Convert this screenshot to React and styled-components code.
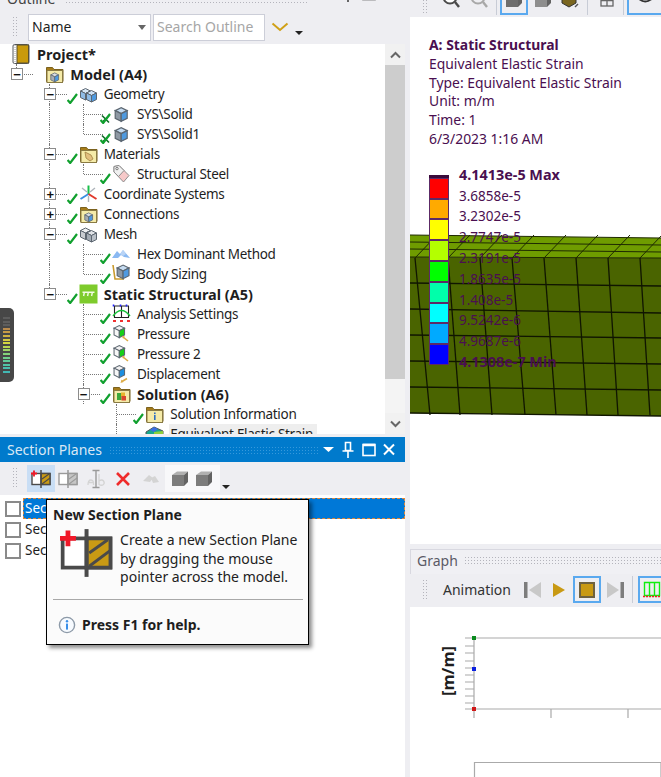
import React from "react";
import styled, { createGlobalStyle } from "styled-components";

const GlobalStyle = createGlobalStyle`
    html, body {
        margin: 0;
        padding: 0;
        overflow: hidden;
    }
    * {
        box-sizing: border-box;
    }
`

const FONT = `"Noto Sans", "Open Sans", "Liberation Sans", sans-serif`

const grip = `
    background-image: radial-gradient(#b4b4bc 0.8px, transparent 1px);
    background-size: 3px 3px;
`

/* tree data: cells describe the guide column for each indent level */
const treeRows = [
    { label: "Project*", bold: true, icon: "book", cells: [] },
    { label: "Model (A4)", bold: true, icon: "modelFolder", cells: ["minusUp"] },
    { label: "Geometry", icon: "cubes", mark: "check", cells: ["", "minus"] },
    { label: "SYS\\Solid", icon: "cube", mark: "cross", cells: ["", "pipe", "tee"] },
    { label: "SYS\\Solid1", icon: "cube", mark: "cross", cells: ["", "pipe", "end"] },
    { label: "Materials", icon: "tagFolder", mark: "check", cells: ["", "minus"] },
    { label: "Structural Steel", icon: "tag", mark: "check", cells: ["", "pipe", "end"] },
    { label: "Coordinate Systems", icon: "axes", mark: "check", cells: ["", "plus"] },
    { label: "Connections", icon: "modelFolder", mark: "check", cells: ["", "plus"] },
    { label: "Mesh", icon: "meshCube", mark: "check", cells: ["", "minus"] },
    { label: "Hex Dominant Method", icon: "wave", mark: "check", cells: ["", "pipe", "tee"] },
    { label: "Body Sizing", icon: "sizing", mark: "check", cells: ["", "pipe", "end"] },
    { label: "Static Structural (A5)", bold: true, icon: "static", mark: "check", cells: ["", "minusUp"] },
    { label: "Analysis Settings", icon: "analysis", mark: "check", cells: ["", "", "tee"] },
    { label: "Pressure", icon: "pressure", mark: "check", cells: ["", "", "tee"] },
    { label: "Pressure 2", icon: "pressure", mark: "check", cells: ["", "", "tee"] },
    { label: "Displacement", icon: "displacement", mark: "check", cells: ["", "", "tee"] },
    { label: "Solution (A6)", bold: true, icon: "solutionFolder", mark: "check", cells: ["", "", "minus"] },
    { label: "Solution Information", icon: "infoFolder", mark: "check", cells: ["", "", "", "tee"] },
    { label: "Equivalent Elastic Strain", icon: "contour", hover: true, cells: ["", "", "", "tee"] },
]

const legendBands = ["#ff0000", "#ffaa00", "#ffff00", "#b4ff00", "#00ff00", "#00ffaa", "#00ffff", "#00aaff", "#0000ff"]

const legendLabels = [
    { text: "4.1413e-5 Max", bold: true },
    { text: "3.6858e-5" },
    { text: "3.2302e-5" },
    { text: "2.7747e-5" },
    { text: "2.3191e-5" },
    { text: "1.8635e-5" },
    { text: "1.408e-5" },
    { text: "9.5242e-6" },
    { text: "4.9687e-6" },
    { text: "4.1308e-7 Min", bold: true },
]

const meterTicks = ["#5d5d5d", "#5d5d5d", "#5d5d5d", "#b98a4c", "#c79a45", "#d0b040", "#d5c93f", "#d2d640", "#b7d64f", "#9ed566", "#84d37a", "#6fd08b", "#5fcb9a", "#52c5a6", "#49bfae", "#42b8b4"]

const CUBE_BLUE = "#4f9ae0"

const TreeIcon = ({ kind }) => {
    const cube = (x, y, s, front, top = "#d9dde2", side = "#a9adb3") => (
        <g transform={`translate(${x} ${y}) scale(${s})`} stroke="#5c6670" strokeWidth="1">
            <polygon points="1,3 6,0.5 11,3 6,5.5" fill={top} />
            <polygon points="1,3 6,5.5 6,12 1,9.5" fill={side} />
            <polygon points="6,5.5 11,3 11,9.5 6,12" fill={front} />
        </g>
    )
    const folder = (glyph) => (
        <g>
            <path d="M1.5 17.5V3.5h6l1.5 2h9v12z" fill="#a67c1a" stroke="#7b621f" strokeWidth="1" />
            <rect x="2" y="6.5" width="15.5" height="12" fill="#f5eba9" stroke="#8a7b44" strokeWidth="1" />
            {glyph}
        </g>
    )
    switch (kind) {
        case "book":
            return (
                <svg width="19" height="20" viewBox="0 0 19 20">
                    <rect x="1" y="0.5" width="16" height="19" rx="1.5" fill="#fff" stroke="#55585d" />
                    <rect x="5" y="1" width="11.5" height="18" fill="#c99a0b" stroke="#5a5030" />
                    <path d="M3 1v18" stroke="#a0a0a0" strokeDasharray="1 1" />
                </svg>
            )
        case "modelFolder":
            return <svg width="19" height="20" viewBox="0 0 19 20">{folder(cube(5, 8.5, 0.78, CUBE_BLUE))}</svg>
        case "tagFolder":
            return (
                <svg width="19" height="20" viewBox="0 0 19 20">
                    {folder(<path d="M6 8l6 3 2 4-3 2-4-3z" fill="#e2bf7e" stroke="#a08040" strokeWidth="0.8" />)}
                </svg>
            )
        case "solutionFolder":
            return (
                <svg width="19" height="20" viewBox="0 0 19 20">
                    {folder(
                        <g>
                            <rect x="5" y="9" width="4.5" height="7" fill="#3da83c" />
                            <rect x="9" y="8.5" width="4" height="4" fill="#e8b52c" />
                            <rect x="9.5" y="12" width="4.5" height="4.5" fill="#d9472f" />
                        </g>
                    )}
                </svg>
            )
        case "infoFolder":
            return (
                <svg width="19" height="20" viewBox="0 0 19 20">
                    {folder(
                        <g>
                            <rect x="9" y="8.5" width="1.6" height="1.6" fill="#2f6fc0" />
                            <rect x="9" y="11" width="1.6" height="5" fill="#2f6fc0" />
                        </g>
                    )}
                </svg>
            )
        case "cubes":
            return (
                <svg width="19" height="20" viewBox="0 0 19 20">
                    {cube(0.5, 4, 1, "#b7d6f2", "#d8e8f6", "#8fbce6")}
                    {cube(6.5, 6, 1, CUBE_BLUE, "#cfe3f6", "#8fbce6")}
                </svg>
            )
        case "meshCube":
            return (
                <svg width="19" height="20" viewBox="0 0 19 20">
                    {cube(0.5, 3.5, 1, "#dfe2e6", "#eef0f2", "#c8ccd1")}
                    {cube(6.5, 6, 1, "#b9c0c8", "#e0e3e7", "#a4acb5")}
                </svg>
            )
        case "cube":
            return <svg width="19" height="20" viewBox="0 0 19 20">{cube(2, 3, 1.2, CUBE_BLUE, "#c5dbf0", "#8d98a3")}</svg>
        case "tag":
            return (
                <svg width="19" height="20" viewBox="0 0 19 20">
                    <path d="M2 2.5l5-1 10 10-5.5 6.5L2 8z" fill="#f6c9c9" stroke="#8d8d8d" />
                    <path d="M2 2.5l5-1 5 5-5.5 6L2 8z" fill="#f0f0f0" stroke="#8d8d8d" />
                    <circle cx="5" cy="4.6" r="1.2" fill="#fff" stroke="#777" />
                </svg>
            )
        case "axes":
            return (
                <svg width="19" height="20" viewBox="0 0 19 20" strokeWidth="2" fill="none">
                    <path d="M9.5 10V1.5" stroke="#19c04a" />
                    <path d="M9.5 10L1.5 15" stroke="#3a8fe0" />
                    <path d="M9.5 10L17.5 15" stroke="#e0392b" />
                    <path d="M3 4l5 4M16 4l-5 4M9.5 12v6" stroke="#aeb4ba" strokeWidth="1.4" />
                </svg>
            )
        case "wave":
            return (
                <svg width="19" height="20" viewBox="0 0 19 20">
                    <path d="M0 14l5-7 3 3 3-4 7 8-6-1-3-2-3 3z" fill="#8ab9f2" />
                    <path d="M8 10l3-4 3 4-3 2z" fill="#b9d4f6" />
                </svg>
            )
        case "sizing":
            return (
                <svg width="19" height="20" viewBox="0 0 19 20">
                    <path d="M1 1l2 14h9" fill="none" stroke="#c99a2c" strokeWidth="1.6" />
                    {cube(4, 0.5, 1.18, CUBE_BLUE, "#c5dbf0", "#8d98a3")}
                </svg>
            )
        case "static":
            return (
                <svg width="19" height="20" viewBox="0 0 19 20">
                    <rect x="0.5" y="0.5" width="18" height="19" fill="#7ecb2c" />
                    <path d="M3.5 8.2h12M5.4 8.2L4.6 12M9.4 8.2L8.6 12M13.4 8.2L12.6 12" stroke="#f2fbe4" strokeWidth="1.4" fill="none" />
                </svg>
            )
        case "analysis":
            return (
                <svg width="19" height="20" viewBox="0 0 19 20" fill="none">
                    <path d="M2 2h15M2 13.5h15M2.5 2v12M9.5 2v12M16.5 2v12" stroke="#222" strokeWidth="1.1" />
                    <path d="M1.5 0.5v2M8.5 0.5v2M14.5 0.5v2" stroke="#2222ff" strokeWidth="1.6" />
                    <path d="M1 12q8.5-11 17 0" stroke="#18c23a" strokeWidth="1.4" />
                    <path d="M1 17h3M8 17h3M15 17h3" stroke="#f03030" strokeWidth="2" />
                </svg>
            )
        case "pressure":
            return (
                <svg width="19" height="20" viewBox="0 0 19 20">
                    <g transform="translate(1 1)">{cube(0, 0, 1.05, "#18d018", "#f2f2f2", "#f8f8f8")}</g>
                    <path d="M11 13l5 4" stroke="#dcab45" strokeWidth="1.6" />
                    <path d="M10 12l3 0.5-2 2.2z" fill="#dcab45" />
                </svg>
            )
        case "displacement":
            return (
                <svg width="19" height="20" viewBox="0 0 19 20">
                    <g transform="translate(1 1)">{cube(0, 0, 1.05, "#1d8fe0", "#f2f2f2", "#f8f8f8")}</g>
                    <path d="M15 14.5l-5 3" stroke="#dcab45" strokeWidth="1.6" />
                    <path d="M8.5 19l1-3.5 2 2.4z" fill="#dcab45" />
                </svg>
            )
        case "contour":
            return (
                <svg width="19" height="20" viewBox="0 0 19 20">
                    <polygon points="1,8 9,3 18,7 18,14 9,18 1,14" fill="#19a78d" stroke="#555" />
                    <polygon points="5,6 9,3 13,5 9,8" fill="#3d6de0" />
                    <polygon points="9,8 18,7 18,11 9,12" fill="#8fcf3c" />
                </svg>
            )
        default:
            return null
    }
}

const Mark = ({ kind }) => (
    <svg width="11" height="11" viewBox="0 0 11 11">
        {kind === "cross" && <path d="M2 2.5l7 7M9 2.5l-7 7" stroke="#0c6d24" strokeWidth="1.6" />}
        <path d="M0.6 7l2.6 3L10 1" fill="none" stroke="#10a02e" strokeWidth="2.2" />
    </svg>
)

const SectionIcon = ({ size = 20, dim, plus }) => {
    const ink = dim ? "#9a9a9a" : "#4a4a4a"
    const fill = dim ? "#c6c6c6" : "#c99a14"
    return (
        <svg width={size} height={size} viewBox="0 0 20 20">
            <rect x="1" y="4.5" width="18" height="11" fill="#fff" stroke={ink} strokeWidth="1.4" />
            <rect x="10" y="4.5" width="9" height="11" fill={fill} stroke={ink} strokeWidth="1.4" />
            <path d="M11 10l7-5M11 15l8-6" stroke={ink} strokeWidth="1.1" />
            <path d="M10 1v18" stroke={ink} strokeWidth="1.5" />
            {plus && <path d="M0 4.5h6M3 1.5v6" stroke="#f01828" strokeWidth="1.8" />}
        </svg>
    )
}

const SolidIcon = ({ color = "#7c7c7c" }) => (
    <svg width="18" height="18" viewBox="0 0 18 18">
        <polygon points="1,5 6,1.5 17,1.5 13,5" fill="#b0b0b0" />
        <polygon points="1,5 13,5 13,16 1,16" fill={color} />
        <polygon points="13,5 17,1.5 17,12 13,16" fill="#636363" />
    </svg>
)

const WindowControls = ({ color }) => (
    <svg width="78" height="18" viewBox="0 0 78 18" fill="none" stroke={color}>
        <polygon points="5,6 16,6 10.5,11" fill={color} stroke="none" />
        <path d="M27.5 1.5h5v8h-5zM24.5 10h11M30 10v7M32.5 2v7" strokeWidth="1.6" />
        <rect x="45" y="3.5" width="12" height="11" strokeWidth="1.6" />
        <path d="M45 4h12" strokeWidth="2.5" />
        <path d="M66 3.5l10 10M76 3.5l-10 10" strokeWidth="2" />
    </svg>
)

const Chevron = ({ up }) => (
    <svg width="11" height="8" viewBox="0 0 11 8">
        <path d={up ? "M1 6.5l4.5-4.5 4.5 4.5" : "M1 1.5l4.5 4.5 4.5-4.5"} fill="none" stroke="#666" strokeWidth="2" />
    </svg>
)

const verticals = [[415, 430], [448, 460], [480, 492], [512, 525], [544, 556], [576, 587], [608, 618], [640, 650]]
const rowLines = [[283, 286], [309, 313], [335, 338], [361, 364], [387, 390]]

const MeshModel = () => (
    <ModelSvg viewBox="410 17 251 527">
        <polygon points="410,235 661,238 661,258 410,257" fill="#6f9c00" />
        <polygon points="410,257 661,258 661,416 410,413" fill="#4a6400" />
        <g stroke="#1f2a00" strokeWidth="1" fill="none">
            <path d="M410 235L661 238" />
            <path d="M410 242L661 245M410 249L661 252" />
            <path d="M410 257L661 258" />
            {verticals.map(([top]) => (
                <path key={top} d={`M${top} 258L${top + 22} 235`} />
            ))}
            <g strokeWidth="1.3" stroke="#101500">
                {verticals.map(([top, bottom]) => (
                    <path key={top} d={`M${top} 258L${bottom} 415`} />
                ))}
                {rowLines.map(([left, right]) => (
                    <path key={left} d={`M410 ${left}L661 ${right}`} />
                ))}
                <path d="M410 413L661 416" />
            </g>
        </g>
    </ModelSvg>
)

const GraphChart = () => (
    <ChartSvg viewBox="410 607 251 170">
        <g stroke="#aaa" strokeWidth="1.2" fill="none">
            <path d="M465 638H661M474 638V718M465 709H661M551 709V718M628 709V718" />
            <path d="M465 646h9M465 653h9M465 661h9M465 668h9M465 675h9M465 682h9M465 689h9M465 696h9M465 703h9" />
            <path d="M474.5 762.5H661V790H474.5z" />
        </g>
        <rect x="472" y="636" width="4" height="4" fill="#0a8a1e" />
        <rect x="472" y="667" width="4" height="4" fill="#0a20e0" />
        <rect x="472" y="707" width="4" height="4" fill="#d01818" />
        <AxisLabel x="449" y="671" transform="rotate(-90 449 671)" textAnchor="middle" dominantBaseline="middle">
            [m/m]
        </AxisLabel>
    </ChartSvg>
)

const App = () => (
    <Page>
        <GlobalStyle />
        <LeftColumn>
            <ClippedTitle>
                <ClippedTitleText>Outline</ClippedTitleText>
                <TitleGrip />
                <ClippedControls>
                    <WindowControls color="#444" />
                </ClippedControls>
            </ClippedTitle>
            <OutlineToolbar>
                <ToolbarGrip />
                <NameSelect>
                    Name
                    <SelectArrow />
                </NameSelect>
                <SearchBox>Search Outline</SearchBox>
                <FilterChevron viewBox="0 0 18 10">
                    <path d="M1.5 1.5L9 8l7.5-6.5" fill="none" stroke="#d0a017" strokeWidth="2" />
                </FilterChevron>
                <MoreArrow $top={17} $left={6} />
            </OutlineToolbar>
            <TreePanel>
                <TreeBody>
                    {treeRows.map((row) => (
                        <TreeRow key={row.label}>
                            {row.cells.map((cell, i) => (
                                <GuideCell key={i} $type={cell}>
                                    {(cell === "minus" || cell === "minusUp") && <Expander>−</Expander>}
                                    {cell === "plus" && <Expander>+</Expander>}
                                </GuideCell>
                            ))}
                            <MarkSlot>{row.mark && <Mark kind={row.mark} />}</MarkSlot>
                            <IconSlot>
                                <TreeIcon kind={row.icon} />
                            </IconSlot>
                            <TreeLabel $bold={row.bold} $hover={row.hover}>{row.label}</TreeLabel>
                        </TreeRow>
                    ))}
                </TreeBody>
                <Scrollbar>
                    <ScrollButton><Chevron up /></ScrollButton>
                    <ScrollThumb />
                    <ScrollTrack />
                    <ScrollButton><Chevron /></ScrollButton>
                </Scrollbar>
            </TreePanel>
            <SectionHeader>
                <SectionTitle>Section Planes</SectionTitle>
                <SectionGrip />
                <WindowControls color="#fff" />
            </SectionHeader>
            <SectionToolbar>
                <ToolbarGrip />
                <ToolButton $active><SectionIcon plus /></ToolButton>
                <ToolButton><SectionIcon dim /></ToolButton>
                <ToolButton>
                    <svg width="20" height="20" viewBox="0 0 20 20" fill="none">
                        <path d="M10 1v18M6.5 1.5h7M6.5 18.5h7" stroke="#9a9a9a" strokeWidth="1.4" />
                        <path d="M2 16q0-5 3-5t2.5 5M2 13.5h5M13 5v11M13 12q3-2 4.5 0t0 3.5q-2 1.5-4.5 0" stroke="#d4d4d4" strokeWidth="1.3" />
                    </svg>
                </ToolButton>
                <ToolButton>
                    <svg width="18" height="18" viewBox="0 0 18 18">
                        <path d="M3 3l12 12M15 3L3 15" stroke="#ef2b2b" strokeWidth="2.6" />
                    </svg>
                </ToolButton>
                <ToolButton>
                    <svg width="20" height="20" viewBox="0 0 20 20">
                        <path d="M2 12l6-6 4 3-3 4zM10 9l4-2 4 6-6 1z" fill="#d4d4d4" />
                    </svg>
                </ToolButton>
                <SolidGroup>
                    <SolidIcon />
                    <SolidIcon />
                </SolidGroup>
                <MoreArrow $top={20} $left={2} />
            </SectionToolbar>
            <SectionList>
                {[1, 2, 3].map((n) => (
                    <SectionRow key={n}>
                        <CheckBox />
                        <SectionName $selected={n === 1}>Section Plane {n}</SectionName>
                    </SectionRow>
                ))}
                <Tooltip>
                    <TipTitle>New Section Plane</TipTitle>
                    <TipBody>
                        <SectionIcon size={54} plus />
                        <TipText>Create a new Section Plane by dragging the mouse pointer across the model.</TipText>
                    </TipBody>
                    <TipDivider />
                    <TipFooter>
                        <svg width="18" height="18" viewBox="0 0 18 18">
                            <circle cx="9" cy="9" r="7.6" fill="#f7fbff" stroke="#8d9aa8" strokeWidth="1.4" />
                            <circle cx="9" cy="5.2" r="1.2" fill="#3a8fe8" />
                            <rect x="8" y="7.6" width="2" height="6" fill="#3a8fe8" />
                        </svg>
                        <TipHelp>Press F1 for help.</TipHelp>
                    </TipFooter>
                </Tooltip>
            </SectionList>
            <Meter>
                {meterTicks.map((color, i) => (
                    <MeterTick key={i} $color={color} />
                ))}
            </Meter>
        </LeftColumn>
        <RightColumn>
            <TopToolbar>
                <ToolbarGrip />
                <TopTool $left={13}>
                    <svg width="18" height="22" viewBox="0 0 18 22" fill="none">
                        <circle cx="8" cy="8" r="6.5" fill="#fff" stroke="#4a4a4a" strokeWidth="2" />
                        <path d="M13 13l4 5" stroke="#4a4a4a" strokeWidth="2.4" />
                        <path d="M4 8h7M4 8l3-2" stroke="#d0a017" strokeWidth="1.6" />
                    </svg>
                </TopTool>
                <TopTool $left={10}>
                    <svg width="18" height="22" viewBox="0 0 18 22" fill="none">
                        <circle cx="8" cy="8" r="6.5" stroke="#a8a8a8" strokeWidth="2" />
                        <path d="M13 13l4 5" stroke="#a8a8a8" strokeWidth="2.4" />
                    </svg>
                </TopTool>
                <TopDivider />
                <TopTool $left={3} $boxed><SolidIcon color="#6e6e6e" /></TopTool>
                <TopTool $left={6}><SolidIcon color="#8e8e8e" /></TopTool>
                <TopTool $left={9}>
                    <svg width="18" height="18" viewBox="0 0 18 18">
                        <polygon points="1,5 8,1 15,5 15,12 8,16 1,12" fill="#7a6620" stroke="#333" />
                        <rect x="4" y="6" width="4" height="3" fill="#d0a017" />
                        <path d="M14 16l3-3" stroke="#555" strokeWidth="1.4" />
                    </svg>
                </TopTool>
                <TopDivider />
                <TopTool $left={11}>
                    <svg width="16" height="16" viewBox="0 0 16 16" fill="none" stroke="#666" strokeWidth="1.3">
                        <rect x="2" y="3" width="12" height="11" />
                        <path d="M8 3v11M2 8.5h12" />
                    </svg>
                </TopTool>
                <TopDivider />
                <TopTool $left={3} $boxed $open>
                    <svg width="28" height="18" viewBox="0 0 28 18" fill="none">
                        <path d="M3 6q8 9 17 0" stroke="#333" strokeWidth="1.8" />
                        <circle cx="3" cy="5" r="2" fill="#d0a017" />
                    </svg>
                </TopTool>
            </TopToolbar>
            <Viewport>
                <MeshModel />
                <Annotation>
                    <AnnotationTitle>A: Static Structural</AnnotationTitle>
                    <div>Equivalent Elastic Strain</div>
                    <div>Type: Equivalent Elastic Strain</div>
                    <div>Unit: m/m</div>
                    <div>Time: 1</div>
                    <div>6/3/2023 1:16 AM</div>
                </Annotation>
                <Legend>
                    <LegendBar>
                        {legendBands.map((band) => (
                            <LegendBand key={band} $color={band} />
                        ))}
                    </LegendBar>
                    <LegendLabels>
                        {legendLabels.map(({ text, bold }) => (
                            <LegendLabel key={text} $bold={bold}>{text}</LegendLabel>
                        ))}
                    </LegendLabels>
                </Legend>
            </Viewport>
            <GraphHeader>
                <GraphTitle>Graph</GraphTitle>
                <GraphGrip />
            </GraphHeader>
            <GraphToolbar>
                <ToolbarGrip />
                <AnimationLabel>Animation</AnimationLabel>
                <svg width="17" height="18" viewBox="0 0 17 18">
                    <rect x="0" y="1" width="3.5" height="16" fill="#7d7d7d" />
                    <polygon points="17,1 17,17 5,9" fill="#c8c8c8" />
                </svg>
                <PlayIcon width="14" height="14" viewBox="0 0 14 14">
                    <polygon points="1,0 13,7 1,14" fill="#c99a14" />
                </PlayIcon>
                <StopButton><StopSquare /></StopButton>
                <svg width="17" height="18" viewBox="0 0 17 18">
                    <polygon points="0,1 0,17 12,9" fill="#c8c8c8" />
                    <rect x="13.5" y="1" width="3.5" height="16" fill="#7d7d7d" />
                </svg>
                <GraphDivider />
                <StopButton>
                    <svg width="20" height="20" viewBox="0 0 20 20" fill="none">
                        <path d="M2.5 2.5h15v13h-15zM7.5 2.5v13M12.5 2.5v13" stroke="#10ee10" strokeWidth="1.4" />
                        <path d="M1 16.5h18" stroke="#f02020" strokeWidth="1.4" strokeDasharray="2 1" />
                    </svg>
                </StopButton>
            </GraphToolbar>
            <GraphArea>
                <GraphChart />
            </GraphArea>
        </RightColumn>
    </Page>
)

export default App

const Page = styled.div`
    position: relative;
    display: flex;
    width: 661px;
    height: 777px;
    overflow: hidden;
    background-color: #eeeef2;
    font-family: ${FONT};
    color: #1e1e1e;
`

const LeftColumn = styled.div`
    display: flex;
    flex-direction: column;
    flex: none;
    width: 405px;
    height: 777px;
`

const RightColumn = styled.div`
    display: flex;
    flex-direction: column;
    flex: none;
    width: 256px;
    height: 777px;
`

const ClippedTitle = styled.div`
    display: flex;
    align-items: flex-end;
    flex: none;
    height: 14px;
    padding: 0 9px 0 7px;
    overflow: hidden;
`

const ClippedTitleText = styled.span`
    flex: none;
    margin-bottom: 5px;
    font-size: 14px;
    line-height: 20px;
    color: #444;
`

const TitleGrip = styled.div`
    flex: 1;
    height: 8px;
    margin: 0 10px 11px;
    ${grip}
`

const ClippedControls = styled.div`
    display: flex;
    flex: none;
    margin-bottom: 11px;
`

const OutlineToolbar = styled.div`
    display: flex;
    align-items: flex-start;
    flex: none;
    height: 30px;
    padding-left: 12px;
`

const ToolbarGrip = styled.div`
    flex: none;
    width: 7px;
    height: 22px;
    margin-top: 2px;
    ${grip}
`

const NameSelect = styled.div`
    display: flex;
    align-items: center;
    justify-content: space-between;
    width: 123px;
    height: 27px;
    margin-left: 9px;
    padding: 0 4px 2px 3px;
    background-color: #fff;
    border: 1px solid #ccced8;
    font-size: 14px;
`

const SelectArrow = styled.span`
    width: 0;
    height: 0;
    margin-top: 2px;
    border-left: 4.5px solid transparent;
    border-right: 4.5px solid transparent;
    border-top: 5px solid #666;
`

const SearchBox = styled.div`
    display: flex;
    align-items: center;
    width: 112px;
    height: 27px;
    margin-left: 2px;
    padding: 0 0 2px 3px;
    background-color: #fff;
    border: 1px solid #ccced8;
    font-size: 14px;
    color: #a6a6a6;
    white-space: nowrap;
`

const FilterChevron = styled.svg`
    flex: none;
    width: 18px;
    height: 10px;
    margin: 8px 0 0 6px;
`

const MoreArrow = styled.span`
    flex: none;
    width: 0;
    height: 0;
    margin: ${({ $top }) => $top}px 0 0 ${({ $left }) => $left}px;
    border-left: 4px solid transparent;
    border-right: 4px solid transparent;
    border-top: 4px solid #222;
`

const TreePanel = styled.div`
    display: flex;
    flex: none;
    height: 390px;
    overflow: hidden;
    background-color: #fff;
`

const TreeBody = styled.div`
    flex: 1;
    overflow: hidden;
`

const TreeRow = styled.div`
    display: flex;
    align-items: center;
    height: 20px;
`

const GuideCell = styled.div`
    position: relative;
    flex: none;
    align-self: stretch;
    width: 33.33px;

    ${({ $type }) => ["pipe", "tee", "end", "minus", "minusUp", "plus"].includes($type) && `
        &::before {
            content: "";
            position: absolute;
            left: 16px;
            top: 0;
            bottom: ${$type === "end" || $type === "minusUp" ? "10px" : "0"};
            border-left: 1px dotted #777;
        }
    `}

    ${({ $type }) => $type && $type !== "pipe" && `
        &::after {
            content: "";
            position: absolute;
            left: 17px;
            right: ${$type === "tee" || $type === "end" ? "-3px" : "0"};
            top: 10px;
            border-top: 1px dotted #777;
        }
    `}
`

const Expander = styled.span`
    position: absolute;
    z-index: 1;
    left: 11px;
    top: 4px;
    display: flex;
    align-items: center;
    justify-content: center;
    width: 12px;
    height: 12px;
    background-color: #fff;
    border: 1px solid #8c8c8c;
    font-family: "Liberation Sans", sans-serif;
    font-size: 13px;
    font-weight: 700;
    line-height: 1;
    color: #111;
`

const MarkSlot = styled.div`
    display: flex;
    align-items: flex-end;
    align-self: stretch;
    flex: none;
    width: 12px;
`

const IconSlot = styled.div`
    display: flex;
    align-items: center;
    justify-content: center;
    flex: none;
    width: 19px;
    height: 20px;
`

const TreeLabel = styled.span`
    margin-left: 5px;
    padding: 0 ${({ $hover }) => ($hover ? "4px" : "1px")} 0 1px;
    font-size: ${({ $bold }) => ($bold ? "14.5px" : "13.5px")};
    letter-spacing: ${({ $bold }) => ($bold ? "0" : "-0.3px")};
    line-height: 20px;
    white-space: nowrap;
    font-weight: ${({ $bold }) => ($bold ? 700 : 400)};
    background-color: ${({ $hover }) => ($hover ? "#eeeeee" : "transparent")};
`

const Scrollbar = styled.div`
    display: flex;
    flex-direction: column;
    flex: none;
    width: 20px;
`

const ScrollButton = styled.div`
    display: flex;
    align-items: center;
    justify-content: center;
    flex: none;
    height: 21px;
    background-color: #f1f1f1;
`

const ScrollThumb = styled.div`
    flex: none;
    height: 314px;
    background-color: #cdcdcd;
`

const ScrollTrack = styled.div`
    flex: 1;
    background-color: #f4f4f4;
`

const SectionHeader = styled.div`
    display: flex;
    align-items: center;
    flex: none;
    height: 25px;
    margin-top: 3px;
    padding: 0 9px 0 7px;
    background-color: #007acc;
`

const SectionTitle = styled.span`
    flex: none;
    font-size: 14px;
    color: #d9e8f5;
`

const SectionGrip = styled.div`
    flex: 1;
    height: 8px;
    margin: 0 0 0 7px;
    opacity: 0.6;
    background-image: radial-gradient(#5aaee6 0.8px, transparent 1px);
    background-size: 3px 3px;
`

const SectionToolbar = styled.div`
    display: flex;
    align-items: flex-start;
    flex: none;
    height: 33px;
    padding: 3px 0 0 12px;
`

const ToolButton = styled.div`
    display: flex;
    align-items: center;
    justify-content: center;
    flex: none;
    width: 27.5px;
    height: 27px;
    margin-left: ${({ $active }) => ($active ? "8px" : "0")};
    background-color: ${({ $active }) => ($active ? "#c9def5" : "transparent")};
`

const SolidGroup = styled.div`
    display: flex;
    align-items: center;
    justify-content: space-between;
    flex: none;
    width: 55px;
    height: 27px;
    padding: 0 7px 0 6px;
    background-color: #f8f8fa;
`

const SectionList = styled.div`
    position: relative;
    flex: 1;
    padding-top: 3px;
    background-color: #fff;
`

const SectionRow = styled.div`
    display: flex;
    align-items: center;
    height: 21px;
    padding-left: 5px;
`

const CheckBox = styled.span`
    flex: none;
    width: 16px;
    height: 16px;
    background-color: #fff;
    border: 2px solid #8a8a8a;
`

const SectionName = styled.div`
    flex: 1;
    height: 21px;
    margin-left: 2px;
    padding-left: 1px;
    font-size: 13.5px;
    line-height: 19px;
    color: ${({ $selected }) => ($selected ? "#fff" : "#1e1e1e")};
    background-color: ${({ $selected }) => ($selected ? "#0078d7" : "transparent")};
    border: 1px ${({ $selected }) => ($selected ? "dashed #e0883a" : "solid transparent")};
`

const Tooltip = styled.div`
    position: absolute;
    left: 46px;
    top: 4px;
    display: flex;
    flex-direction: column;
    width: 263px;
    height: 146px;
    padding: 5px 5px 0 6px;
    background-color: #fbfbfb;
    border: 1px solid #000;
    box-shadow: 3px 3px 4px rgba(0, 0, 0, 0.45);
`

const TipTitle = styled.div`
    font-size: 14px;
    font-weight: 700;
    line-height: 20px;
`

const TipBody = styled.div`
    display: flex;
    align-items: flex-start;
    gap: 7px;
    margin: 1px 0 0 7px;
    height: 64px;
`

const TipText = styled.div`
    width: 186px;
    margin-top: 5px;
    font-size: 14px;
    line-height: 18.6px;
    color: #222;
`

const TipDivider = styled.div`
    flex: none;
    height: 1px;
    margin-top: 9px;
    background-color: #a8a8a8;
`

const TipFooter = styled.div`
    display: flex;
    align-items: center;
    gap: 6px;
    margin: 15px 0 0 5px;
`

const TipHelp = styled.span`
    font-size: 14px;
    font-weight: 700;
`

const Meter = styled.div`
    position: absolute;
    left: 0;
    top: 308px;
    display: flex;
    flex-direction: column;
    gap: 1.6px;
    width: 14px;
    height: 74px;
    padding: 9px 4px 0 3px;
    background-color: #474747;
    border-radius: 0 5px 5px 0;
`

const MeterTick = styled.div`
    height: 2px;
    background-color: ${({ $color }) => $color};
`

const TopToolbar = styled.div`
    display: flex;
    align-items: flex-end;
    flex: none;
    height: 17px;
    padding: 0 0 2px 17px;
    overflow: hidden;

    & > ${ToolbarGrip} {
        height: 22px;
        margin: 0;
    }
`

const TopTool = styled.div`
    display: flex;
    align-items: center;
    justify-content: center;
    flex: none;
    height: 24px;
    margin-left: ${({ $left }) => $left}px;
    width: ${({ $boxed, $open }) => ($open ? "40px" : $boxed ? "28px" : "auto")};
    border-style: solid;
    border-color: #5aa9ef;
    border-width: ${({ $boxed }) => ($boxed ? "2px" : "0")};
    border-right-width: ${({ $open, $boxed }) => ($open ? "0" : $boxed ? "2px" : "0")};

    & > svg {
        flex: none;
        margin-bottom: 6px;
    }
`

const TopDivider = styled.div`
    flex: none;
    width: 1px;
    height: 24px;
    margin-left: 8px;
    background-color: #c8ccd6;
`

const Viewport = styled.div`
    position: relative;
    flex: none;
    height: 527px;
    margin-left: 5px;
    padding: 19px 0 0 19px;
    background-color: #fff;
    overflow: hidden;
`

const ModelSvg = styled.svg`
    position: absolute;
    left: 0;
    top: 0;
    width: 251px;
    height: 527px;
`

const Annotation = styled.div`
    position: relative;
    font-size: 13.9px;
    line-height: 18.8px;
    color: #4a0f50;
    white-space: nowrap;
`

const AnnotationTitle = styled.div`
    font-weight: 700;
`

const Legend = styled.div`
    position: relative;
    display: flex;
    align-items: flex-start;
    gap: 10px;
    margin-top: 25px;
`

const LegendBar = styled.div`
    display: flex;
    flex-direction: column;
    flex: none;
    width: 20px;
    margin-top: 1px;
    padding-top: 3px;
    background-color: #3a0a3a;
`

const LegendBand = styled.div`
    height: 20.8px;
    background-color: ${({ $color }) => $color};
    border: 1px solid #5c2a66;
`

const LegendLabels = styled.div`
    display: flex;
    flex-direction: column;
    margin-top: -9px;
`

const LegendLabel = styled.div`
    height: 20.8px;
    font-size: ${({ $bold }) => ($bold ? "14.4px" : "13.5px")};
    line-height: 20.8px;
    white-space: nowrap;
    color: #4a0f50;
    font-weight: ${({ $bold }) => ($bold ? 700 : 400)};
`

const GraphHeader = styled.div`
    display: flex;
    align-items: center;
    flex: none;
    height: 25px;
    margin: 5px 0 0 5px;
    padding: 0 0 4px 6px;
    background-color: #f0f0f4;
    border-top: 1px solid #d8d8e0;
    border-left: 1px solid #d8d8e0;
`

const GraphTitle = styled.span`
    flex: none;
    font-size: 14px;
    color: #5a5a66;
`

const GraphGrip = styled.div`
    flex: 1;
    height: 8px;
    margin-left: 6px;
    ${grip}
`

const GraphToolbar = styled.div`
    display: flex;
    align-items: center;
    flex: none;
    height: 33px;
    margin-left: 5px;
    padding: 0 0 2px 12px;
    overflow: hidden;

    & > ${ToolbarGrip} {
        margin-top: 0;
    }

    & > svg {
        flex: none;
    }
`

const AnimationLabel = styled.span`
    flex: none;
    width: 81px;
    margin-left: 14px;
    font-size: 14px;
    color: #333;
`

const PlayIcon = styled.svg`
    flex: none;
    margin: 0 7px 0 11px;
`

const StopButton = styled.div`
    display: flex;
    align-items: center;
    justify-content: center;
    flex: none;
    width: 28px;
    height: 27px;
    margin-right: 6px;
    border: 2px solid #5aa9ef;
`

const StopSquare = styled.span`
    width: 16px;
    height: 16px;
    background-color: #c99a14;
    border: 2px solid #6e6240;
`

const GraphDivider = styled.div`
    flex: none;
    width: 1px;
    height: 27px;
    margin: 0 5px 0 8px;
    background-color: #c8ccd6;
`

const GraphArea = styled.div`
    flex: 1;
    margin-left: 5px;
    background-color: #fff;
`

const ChartSvg = styled.svg`
    display: block;
    width: 251px;
    height: 170px;
`

const AxisLabel = styled.text`
    font-family: ${FONT};
    font-size: 16.5px;
    font-weight: 700;
    fill: #1e1e1e;
`
